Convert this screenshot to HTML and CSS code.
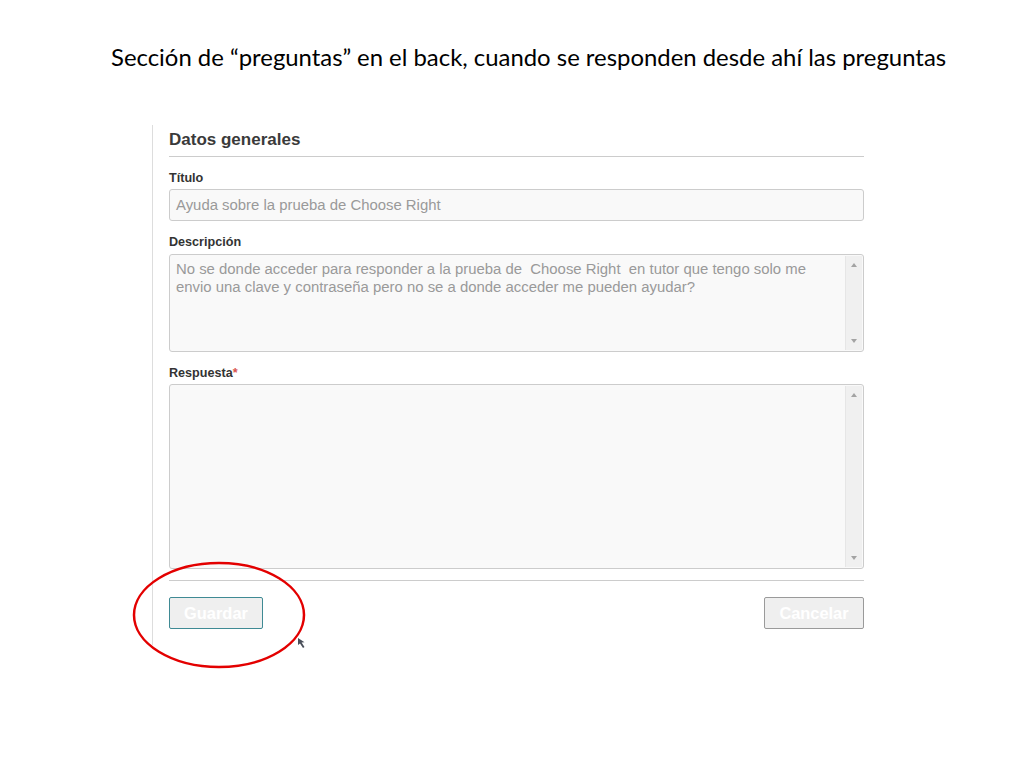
FILE: index.html
```html
<!DOCTYPE html>
<html>
<head>
  <meta charset="UTF-8">
  <link rel="stylesheet" href="styles.css">
</head>
<body>
  <div class="slide">
    <h1 class="slide-title">Sección de “preguntas” en el back, cuando se responden desde ahí las preguntas</h1>

    <div class="panel">
      <h2>Datos generales</h2>

      <div class="form-group">
        <label>Título</label>
        <div class="field">Ayuda sobre la prueba de Choose Right</div>
      </div>

      <div class="form-group">
        <label>Descripción</label>
        <div class="area area-desc">
          <div class="area-text">No se donde acceder para responder a la prueba de &nbsp;Choose Right &nbsp;en tutor que tengo solo me envio una clave y contraseña pero no se a donde acceder me pueden ayudar?</div>
          <div class="scrollbar">
            <span class="arrow-up"></span>
            <span class="arrow-down"></span>
          </div>
        </div>
      </div>

      <div class="form-group">
        <label>Respuesta<span class="required">*</span></label>
        <div class="area area-answer">
          <div class="area-text"></div>
          <div class="scrollbar">
            <span class="arrow-up"></span>
            <span class="arrow-down"></span>
          </div>
        </div>
      </div>

      <div class="actions">
        <button class="btn btn-save">Guardar</button>
        <button class="btn btn-cancel">Cancelar</button>
      </div>

      <!-- annotation drawn over the screenshot -->
      <svg class="highlight" width="180" height="112" viewBox="0 0 180 112">
        <ellipse cx="90" cy="56" rx="85" ry="52" fill="none" stroke="#e30000" stroke-width="2.5"></ellipse>
      </svg>
      <svg class="cursor" width="10" height="12" viewBox="0 0 10 12">
        <path d="M1 1 L1 8 L3 6.5 L6 11 L7.5 10 L4.6 5.6 L7.5 5.2 Z" fill="#4a4f5a"></path>
      </svg>
    </div>
  </div>
</body>
</html>
```

FILE: styles.css
```css
:root {
  --text-primary: #333;
  --text-muted: #9a9a9a;
  --border-color: #ccc;
  --field-bg: #f9f9f9;
}

body {
  margin: 0;
  background: #fff;
  font-family: "Liberation Sans", Arial, sans-serif;
  color: var(--text-primary);
}

.slide {
  width: 1024px;
  height: 768px;
  position: relative;
}

.slide-title {
  margin: 0;
  padding: 41px 0 0 111px;
  font-family: Lato, "Open Sans", sans-serif;
  font-weight: 400;
  font-size: 23.9px;
  line-height: 32px;
  color: #000;
}

.panel {
  position: relative;
  margin: 52px 0 0 152px;
  width: 695px;
  padding: 4px 0 16px 16px;
  border-left: 1px solid #ddd;
}

h2 {
  margin: 0;
  padding: 1px 0 6px 0;
  font-size: 17px;
  line-height: 20px;
  font-weight: 700;
  color: #3a3a3a;
  border-bottom: 1px solid var(--border-color);
}

.form-group {
  margin-top: 13px;
}

label {
  display: block;
  margin-bottom: 3px;
  font-size: 12.6px;
  line-height: 16px;
  font-weight: 700;
  color: var(--text-primary);
}

.required {
  color: #d9534f;
}

.field {
  height: 30px;
  padding: 0 6px;
  border: 1px solid var(--border-color);
  border-radius: 3px;
  background: var(--field-bg);
  font-size: 14.9px;
  line-height: 30px;
  color: var(--text-muted);
}

.area {
  display: flex;
  border: 1px solid var(--border-color);
  border-radius: 3px;
  background: var(--field-bg);
}

.area-desc {
  height: 96px;
  margin-top: 4px;
}

.area-answer {
  height: 183px;
}

.area-text {
  flex: 1;
  padding: 5px 30px 5px 6px;
  font-size: 14.9px;
  line-height: 18px;
  color: var(--text-muted);
}

.scrollbar {
  width: 16px;
  margin: 1px;
  background: #f0f0f0;
  border-left: 1px solid #e6e6e6;
  display: flex;
  flex-direction: column;
  justify-content: space-between;
  align-items: center;
  padding: 7px 0;
}

.arrow-up,
.arrow-down {
  width: 0;
  height: 0;
  border-left: 3px solid transparent;
  border-right: 3px solid transparent;
}

.arrow-up {
  border-bottom: 4px solid #a3a3a3;
}

.arrow-down {
  border-top: 4px solid #a3a3a3;
}

.actions {
  margin-top: 11px;
  padding-top: 16px;
  border-top: 1px solid var(--border-color);
  display: flex;
  justify-content: space-between;
}

.btn {
  height: 32px;
  padding: 0 12px;
  border-radius: 2px;
  background: #efefef;
  color: #fff;
  font-family: "Liberation Sans", Arial, sans-serif;
  font-size: 16.4px;
  font-weight: 700;
}

.btn-save {
  width: 94px;
  border: 1px solid #3f8a94;
}

.btn-cancel {
  width: 100px;
  border: 1px solid #9a9a9a;
}

.highlight {
  position: absolute;
  left: -24px;
  bottom: -26px;
}

.cursor {
  position: absolute;
  left: 144px;
  bottom: -4px;
}
```
